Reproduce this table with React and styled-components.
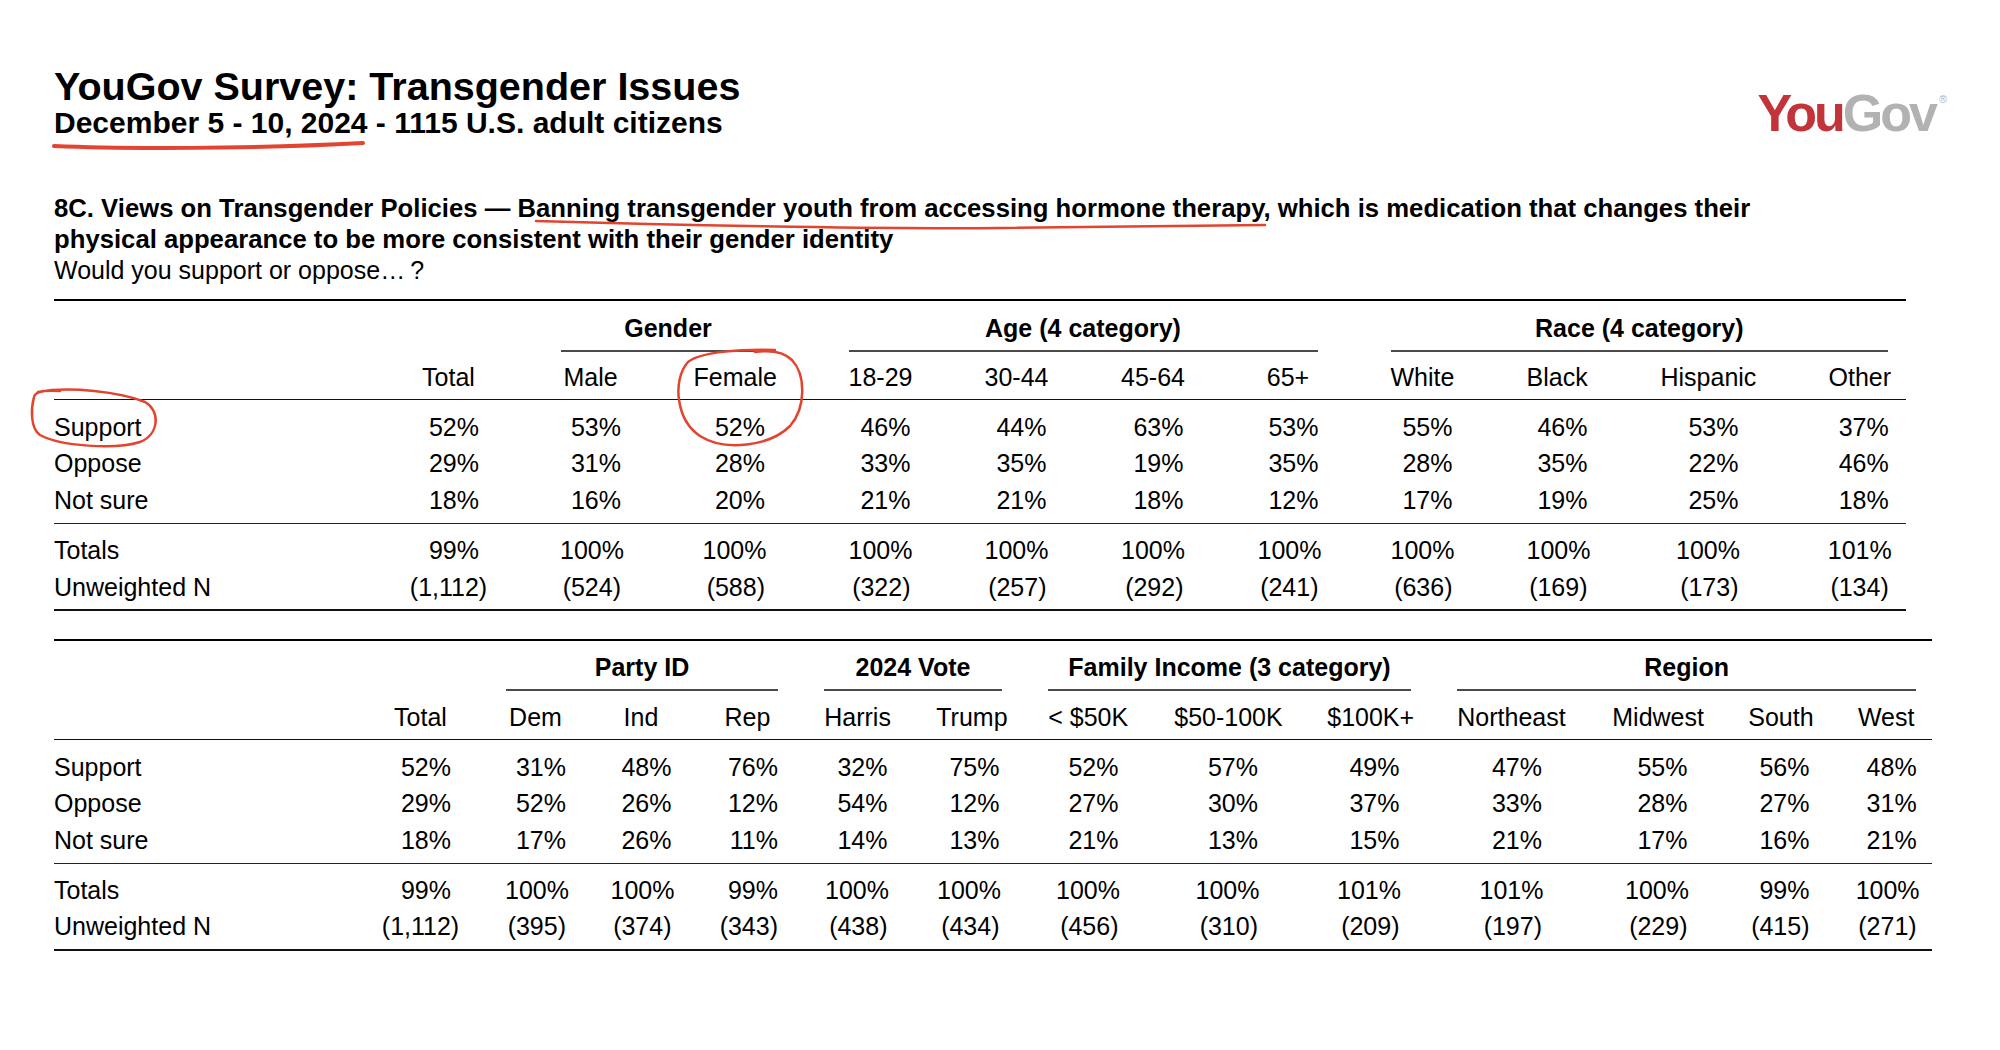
import React from "react";
import styled, { createGlobalStyle } from "styled-components";

const GlobalStyle = createGlobalStyle`
  html, body {
    margin: 0;
    padding: 0;
    background: #ffffff;
  }
  body {
    font-family: "Liberation Sans", Arial, Helvetica, sans-serif;
    color: #000;
  }
`;

const Page = styled.div`
  position: relative;
  width: 2000px;
  min-height: 1050px;
  box-sizing: border-box;
  padding: 65px 0 0 54px;
`;

const Content = styled.div`
  width: 1878px;
`;

const Header = styled.header`
  display: flex;
  justify-content: space-between;
  align-items: flex-start;
`;

const TitleBlock = styled.div`
  display: flex;
  flex-direction: column;
`;

const Title = styled.h1`
  margin: 0;
  font-size: 39.5px;
  line-height: 42px;
  font-weight: 700;
  white-space: nowrap;
`;

const Subtitle = styled.div`
  font-size: 30px;
  line-height: 32px;
  font-weight: 700;
  white-space: nowrap;
`;

const Logo = styled.div`
  margin-top: 22px;
  margin-right: -15px;
  font-size: 52px;
  line-height: 52px;
  font-weight: 700;
  letter-spacing: -3px;
  white-space: nowrap;
`;

const LogoPart = styled.span`
  color: ${(p) => (p.$red ? "#c3343a" : "#b2b2b2")};
`;

const Registered = styled.span`
  display: inline-block;
  vertical-align: top;
  margin-top: 6px;
  margin-left: 4px;
  font-size: 11px;
  line-height: 12px;
  font-weight: 400;
  letter-spacing: 0;
  color: #b2b2b2;
`;

const Question = styled.div`
  margin-top: 54px;
  font-size: 25.7px;
  line-height: 31px;
`;

const QuestionTitle = styled.div`
  font-weight: 700;
`;

const Prompt = styled.div`
  font-weight: 400;
  font-size: 25px;
`;

const Table = styled.section`
  width: ${(p) => p.$width}px;
  margin-top: ${(p) => p.$top}px;
  border-top: 2px solid #000;
  border-bottom: 2.5px solid #111;
  font-size: 25px;
`;

const Head = styled.div`
  padding: ${(p) => p.$padTop}px 0 3.5px;
  border-bottom: 1.5px solid #111;
`;

const Grid = styled.div`
  display: grid;
  grid-template-columns: ${(p) => p.$cols};
  margin-top: ${(p) => p.$gap || 0}px;
`;

const GroupCell = styled.div`
  grid-column: ${(p) => p.$start} / span ${(p) => p.$span};
  padding: 0 ${(p) => (p.$last ? p.$lastPad : p.$pad)}px 0 ${(p) => p.$pad}px;
`;

const GroupLabel = styled.div`
  font-weight: 700;
  text-align: center;
  line-height: 36.5px;
  white-space: nowrap;
`;

const GroupLine = styled.div`
  height: 1.5px;
  margin-top: 3.5px;
  background: #4a4a4a;
`;

const HeadCell = styled.div`
  line-height: 36.5px;
  text-align: center;
  white-space: nowrap;
  padding: 0 ${(p) => (p.$last ? p.$lastPad : p.$pad)}px 0 ${(p) => p.$pad}px;
`;

const Body = styled.div`
  padding: ${(p) => p.$padTop}px 0 ${(p) => (p.$foot ? 4 : 4.5)}px;
  border-bottom: ${(p) => (p.$foot ? "none" : "1.5px solid #222")};
`;

const RowLabel = styled.div`
  line-height: 36.5px;
  height: 36.5px;
  white-space: nowrap;
`;

const ValueCell = styled.div`
  display: flex;
  justify-content: center;
  line-height: 36.5px;
  height: 36.5px;
  padding: 0 ${(p) => (p.$last ? p.$lastPad : p.$pad)}px 0 ${(p) => p.$pad}px;
`;

const Value = styled.span`
  min-width: 61px;
  text-align: right;
  white-space: nowrap;
`;

const Annotations = styled.svg`
  position: absolute;
  top: 0;
  left: 0;
  width: 2000px;
  height: 1050px;
  pointer-events: none;
  overflow: visible;
`;

const Ink = styled.path`
  fill: none;
  stroke: #e3442f;
  stroke-width: ${(p) => p.$w || 3}px;
  stroke-linecap: round;
  stroke-linejoin: round;
`;

const table1 = {
  width: 1852,
  top: 13,
  headPad: 9.3,
  headGap: 7.5,
  bodyPad: 8.5,
  footPad: 8.5,
  cols: "319px 151px 133px 155px 136px 136px 138px 132px 136px 134px 168px 114px",
  pad: 36.5,
  lastPad: 18,
  groups: [
    { label: "Gender", start: 3, span: 2 },
    { label: "Age (4 category)", start: 5, span: 4 },
    { label: "Race (4 category)", start: 9, span: 4 },
  ],
  headers: ["Total", "Male", "Female", "18-29", "30-44", "45-64", "65+", "White", "Black", "Hispanic", "Other"],
  body: [
    ["Support", ["52%", "53%", "52%", "46%", "44%", "63%", "53%", "55%", "46%", "53%", "37%"]],
    ["Oppose", ["29%", "31%", "28%", "33%", "35%", "19%", "35%", "28%", "35%", "22%", "46%"]],
    ["Not sure", ["18%", "16%", "20%", "21%", "21%", "18%", "12%", "17%", "19%", "25%", "18%"]],
  ],
  foot: [
    ["Totals", ["99%", "100%", "100%", "100%", "100%", "100%", "100%", "100%", "100%", "100%", "101%"]],
    ["Unweighted N", ["(1,112)", "(524)", "(588)", "(322)", "(257)", "(292)", "(241)", "(636)", "(169)", "(173)", "(134)"]],
  ],
};

const table2 = {
  width: 1878,
  top: 28,
  headPad: 8,
  headGap: 8.5,
  bodyPad: 8.5,
  footPad: 8,
  cols: "304px 125px 105px 106px 107px 112px 112px 126px 153px 130px 155px 136px 108px 99px",
  pad: 23.25,
  lastPad: 16,
  groups: [
    { label: "Party ID", start: 3, span: 3 },
    { label: "2024 Vote", start: 6, span: 2 },
    { label: "Family Income (3 category)", start: 8, span: 3 },
    { label: "Region", start: 11, span: 4 },
  ],
  headers: ["Total", "Dem", "Ind", "Rep", "Harris", "Trump", "< $50K", "$50-100K", "$100K+", "Northeast", "Midwest", "South", "West"],
  body: [
    ["Support", ["52%", "31%", "48%", "76%", "32%", "75%", "52%", "57%", "49%", "47%", "55%", "56%", "48%"]],
    ["Oppose", ["29%", "52%", "26%", "12%", "54%", "12%", "27%", "30%", "37%", "33%", "28%", "27%", "31%"]],
    ["Not sure", ["18%", "17%", "26%", "11%", "14%", "13%", "21%", "13%", "15%", "21%", "17%", "16%", "21%"]],
  ],
  foot: [
    ["Totals", ["99%", "100%", "100%", "99%", "100%", "100%", "100%", "100%", "101%", "101%", "100%", "99%", "100%"]],
    ["Unweighted N", ["(1,112)", "(395)", "(374)", "(343)", "(438)", "(434)", "(456)", "(310)", "(209)", "(197)", "(229)", "(415)", "(271)"]],
  ],
};

function DataRows({ t, rows }) {
  const n = t.headers.length;
  return rows.map(([label, values]) => (
    <Grid key={label} $cols={t.cols}>
      <RowLabel>{label}</RowLabel>
      {values.map((v, i) => (
        <ValueCell key={i} $pad={t.pad} $lastPad={t.lastPad} $last={i === n - 1}>
          <Value>{v}</Value>
        </ValueCell>
      ))}
    </Grid>
  ));
}

function Crosstab({ t }) {
  const totalCols = t.headers.length + 1;
  return (
    <Table $width={t.width} $top={t.top}>
      <Head $padTop={t.headPad}>
        <Grid $cols={t.cols}>
          {t.groups.map((g) => (
            <GroupCell
              key={g.label}
              $start={g.start}
              $span={g.span}
              $pad={t.pad}
              $lastPad={t.lastPad}
              $last={g.start + g.span - 1 === totalCols}
            >
              <GroupLabel>{g.label}</GroupLabel>
              <GroupLine />
            </GroupCell>
          ))}
        </Grid>
        <Grid $cols={t.cols} $gap={t.headGap}>
          <div />
          {t.headers.map((h, i) => (
            <HeadCell key={h} $pad={t.pad} $lastPad={t.lastPad} $last={i === t.headers.length - 1}>
              {h}
            </HeadCell>
          ))}
        </Grid>
      </Head>
      <Body $padTop={t.bodyPad}>
        <DataRows t={t} rows={t.body} />
      </Body>
      <Body $foot $padTop={t.footPad}>
        <DataRows t={t} rows={t.foot} />
      </Body>
    </Table>
  );
}

export default function App() {
  return (
    <>
      <GlobalStyle />
      <Page>
        <Content>
          <Header>
            <TitleBlock>
              <Title>YouGov Survey: Transgender Issues</Title>
              <Subtitle>December 5 - 10, 2024 - 1115 U.S. adult citizens</Subtitle>
            </TitleBlock>
            <Logo>
              <LogoPart $red>You</LogoPart>
              <LogoPart>Gov</LogoPart>
              <Registered>®</Registered>
            </Logo>
          </Header>
          <Question>
            <QuestionTitle>
              8C. Views on Transgender Policies — Banning transgender youth from accessing hormone therapy, which is medication that changes their
              <br />
              physical appearance to be more consistent with their gender identity
            </QuestionTitle>
            <Prompt>Would you support or oppose…{"\u2009"}?</Prompt>
          </Question>
          <Crosstab t={table1} />
          <Crosstab t={table2} />
        </Content>
        <Annotations viewBox="0 0 2000 1050">
          <Ink $w={4} d="M54 146 C 120 149, 250 149, 363 143" />
          <Ink $w={2.5} d="M536 221 C 700 226, 900 229, 1000 228 C 1100 227, 1200 225, 1265 225" />
          <Ink
            $w={2.5}
            d="M38 392 C 70 386, 120 392, 145 402 C 160 410, 160 434, 140 442 C 115 450, 60 446, 40 435 C 30 428, 31 408, 34 397 C 35 392, 45 390, 60 391"
          />
          <Ink
            $w={2.5}
            d="M775 350 C 740 349, 700 352, 688 362 C 672 380, 676 420, 700 436 C 725 452, 770 446, 790 426 C 806 408, 806 375, 792 360 C 784 352, 770 350, 755 352"
          />
        </Annotations>
      </Page>
    </>
  );
}
